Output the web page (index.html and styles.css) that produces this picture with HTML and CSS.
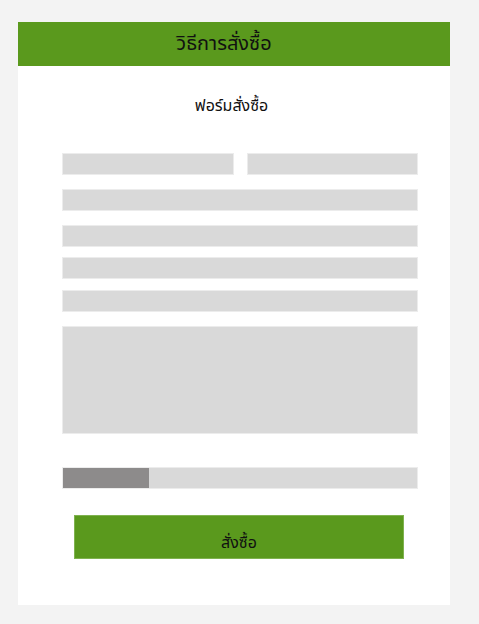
FILE: index.html
```html
<!DOCTYPE html>
<html lang="th">
<head>
<meta charset="utf-8">
<link rel="stylesheet" href="styles.css">
</head>
<body>
<div class="card">
  <div class="header">วิธีการสั่งซื้อ</div>
  <div class="content">
    <div class="title">ฟอร์มสั่งซื้อ</div>
    <div class="form">
      <div class="row r1">
        <div class="field"></div>
        <div class="field"></div>
      </div>
      <div class="field r2"></div>
      <div class="field r3"></div>
      <div class="field r4"></div>
      <div class="field r5"></div>
      <div class="field area"></div>
      <div class="progress"><div class="bar" style="width:86px"></div></div>
      <div class="button">สั่งซื้อ</div>
    </div>
  </div>
</div>
</body>
</html>
```
FILE: styles.css
```css
html, body {
  margin: 0;
  padding: 0;
  background: #f3f3f3;
  font-family: "Noto Sans", "Noto Sans Thai", "Noto Sans CJK SC", sans-serif;
  color: #111;
}
.card {
  margin: 22px 0 0 18px;
  width: 432px;
  height: 583px;
  background: #fff;
  display: flex;
  flex-direction: column;
}
.header {
  height: 44px;
  background: #5a991d;
  display: flex;
  align-items: center;
  justify-content: center;
  padding-right: 20px;
  font-size: 20px;
  color: #111;
}
.content {
  padding: 0 32px 0 44px;
}
.title {
  margin-top: 27px;
  height: 24px;
  line-height: 24px;
  text-align: center;
  font-size: 16px;
  padding-right: 17px;
  color: #111;
}
.form {
  margin-top: 36px;
  width: 356px;
  display: flex;
  flex-direction: column;
}
.row {
  display: flex;
  gap: 13px;
}
.row .field { flex: 1; }
.field {
  height: 22px;
  box-sizing: border-box;
  background: #d9d9d9;
  border: 1px solid #ececec;
}
.r2 { margin-top: 14px; }
.r3 { margin-top: 14px; }
.r4 { margin-top: 10px; }
.r5 { margin-top: 11px; }
.area { margin-top: 14px; height: 108px; }
.progress {
  margin-top: 33px;
  height: 22px;
  box-sizing: border-box;
  background: #d9d9d9;
  border: 1px solid #ececec;
  display: flex;
}
.bar {
  background: #8d8b8b;
  height: 100%;
}
.button {
  margin: 26px 14px 0 12px;
  height: 44px;
  box-sizing: border-box;
  background: #5a991d;
  border: 1px solid #7fb24f;
  display: flex;
  align-items: center;
  justify-content: center;
  padding-top: 12px;
  font-size: 16px;
  color: #111;
}
```
